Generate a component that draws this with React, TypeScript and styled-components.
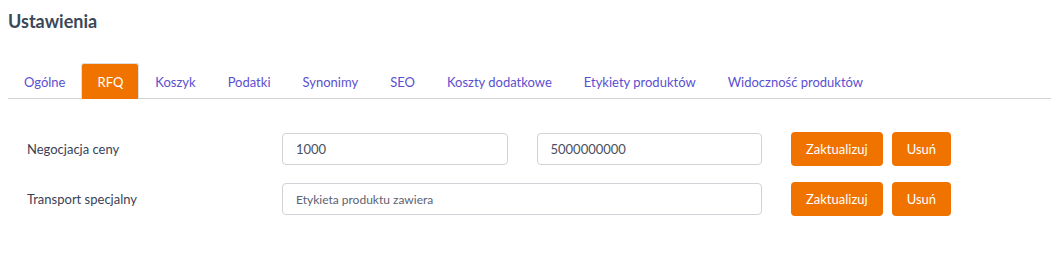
import React, { useState } from 'react';
import styled, { createGlobalStyle } from 'styled-components';

const GlobalStyle = createGlobalStyle`
  * { box-sizing: border-box; }
  body {
    margin: 0;
    background: #fff;
    font-family: 'Lato', 'Open Sans', sans-serif;
    color: #3a4151;
  }
`;

const Page = styled.div`
  padding: 9px 0 0 8px;
`;

const Title = styled.h1`
  margin: 0 0 30px;
  font-size: 18px;
  font-weight: 700;
  line-height: 24px;
  color: #3b4858;
`;

const TabBar = styled.nav`
  display: flex;
  border-bottom: 1px solid #cfd3d8;
`;

const Tab = styled.button<{ $active?: boolean }>`
  margin-bottom: -1px;
  padding: 0 15px;
  height: 36px;
  border: 1px solid ${p => (p.$active ? '#dcdfe3' : 'transparent')};
  border-bottom: none;
  border-radius: 3px 3px 0 0;
  background: ${p => (p.$active ? '#f07300' : 'transparent')};
  color: ${p => (p.$active ? '#fff' : '#5b4fcf')};
  font-family: inherit;
  font-size: 13px;
  cursor: pointer;
`;

const Form = styled.div`
  display: flex;
  flex-direction: column;
  gap: 16px;
  padding: 33px 0 0 19px;
`;

const Row = styled.div`
  display: grid;
  grid-template-columns: 226px 480px auto;
  column-gap: 29px;
  align-items: center;
`;

const Label = styled.label`
  font-size: 13px;
  color: #3a3f55;
`;

const Inputs = styled.div`
  display: flex;
  gap: 29px;
`;

const Input = styled.input<{ $small?: boolean }>`
  flex: 1;
  min-width: 0;
  height: 32px;
  padding: 0 13px;
  border: 1px solid #cfd3d8;
  border-radius: 4px;
  font-family: inherit;
  font-size: ${p => (p.$small ? '12px' : '13px')};
  color: #4a4f5e;
  &::placeholder { color: #5d6270; }
`;

const Actions = styled.div`
  display: flex;
  gap: 9px;
`;

const Button = styled.button`
  height: 34px;
  padding: 0 15px;
  border: none;
  border-radius: 4px;
  background: #f07300;
  color: #fff;
  font-family: inherit;
  font-size: 13px;
  cursor: pointer;
`;

const tabs = ['Ogólne', 'RFQ', 'Koszyk', 'Podatki', 'Synonimy', 'SEO', 'Koszty dodatkowe', 'Etykiety produktów', 'Widoczność produktów'];

export default function App() {
  const [active, setActive] = useState('RFQ');
  return (
    <Page>
      <GlobalStyle />
      <Title>Ustawienia</Title>
      <TabBar>
        {tabs.map(t => (
          <Tab key={t} $active={t === active} onClick={() => setActive(t)}>{t}</Tab>
        ))}
      </TabBar>
      <Form>
        <Row>
          <Label>Negocjacja ceny</Label>
          <Inputs>
            <Input defaultValue="1000" />
            <Input defaultValue="5000000000" />
          </Inputs>
          <Actions>
            <Button>Zaktualizuj</Button>
            <Button>Usuń</Button>
          </Actions>
        </Row>
        <Row>
          <Label>Transport specjalny</Label>
          <Inputs>
            <Input $small placeholder="Etykieta produktu zawiera" />
          </Inputs>
          <Actions>
            <Button>Zaktualizuj</Button>
            <Button>Usuń</Button>
          </Actions>
        </Row>
      </Form>
    </Page>
  );
}
